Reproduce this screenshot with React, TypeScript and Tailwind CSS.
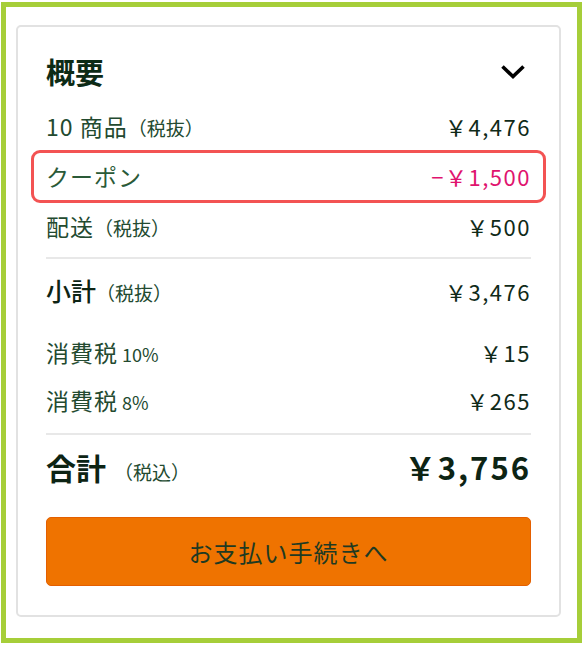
const font = { fontFamily: '"Noto Sans CJK JP", "Liberation Sans", sans-serif' };

function Row({ label, note, value, className = '' }: { label: string; note?: string; value: string; className?: string }) {
  return (
    <div className={`flex items-center justify-between ${className}`}>
      <div className="flex items-baseline text-[#234a30]">
        <span className="text-[23px] tracking-[1px]">{label}</span>
        {note && <span className="text-[19px]">{note}</span>}
      </div>
      <span className="text-[22px] tracking-[1.5px] text-[#0f2a18]">{value}</span>
    </div>
  );
}

export default function App() {
  return (
    <div className="w-[583px] h-[645px] bg-white pt-[2px] pl-[1px]" style={font}>
      <div className="w-[581px] h-[641px] border-[5px] border-[#a6ce39] bg-white pl-[10px] pr-[16px] pt-[18px]">
        <div className="flex flex-col rounded-[5px] border-2 border-[#e2e2e2] px-[28px] pt-[19px] pb-[27px] h-[592px]">
          <div className="flex items-center justify-between h-[52px]">
            <h2 className="text-[29px] font-bold text-[#0d2b16]">概要</h2>
            <svg width="26" height="16" viewBox="0 0 26 16" className="mr-[5px]">
              <polyline points="2.5,2.5 13,12.5 23.5,2.5" fill="none" stroke="#000" strokeWidth="3.6" />
            </svg>
          </div>

          <Row label="10 商品" note="（税抜）" value="￥4,476" className="h-[48px] mt-[4px]" />

          <div className="flex items-center justify-between h-[53px] -mx-[15px] px-[12px] rounded-[9px] border-[3px] border-[#f35353]">
            <span className="text-[23px] tracking-[1px] text-[#2a5a38]">クーポン</span>
            <span className="text-[22px] tracking-[1.5px] text-[#e0136e]">−￥1,500</span>
          </div>

          <Row label="配送" note="（税抜）" value="￥500" className="h-[47px]" />

          <div className="mt-[7px] border-t-2 border-[#e8e8e8]" />

          <div className="flex items-center justify-between h-[64px]">
            <div className="flex items-baseline">
              <span className="text-[25px] font-medium text-[#0d2414]">小計</span>
              <span className="text-[19px] text-[#234a30]">（税抜）</span>
            </div>
            <span className="text-[22px] tracking-[1.5px] text-[#0f2a18]">￥3,476</span>
          </div>

          <div className="flex items-center justify-between h-[48px] mt-[5px]">
            <div className="flex items-baseline text-[#234a30]">
              <span className="text-[23px] tracking-[1px]">消費税</span>
              <span className="ml-1 text-[18px]">10%</span>
            </div>
            <span className="text-[22px] tracking-[1.5px] text-[#0f2a18]">￥15</span>
          </div>

          <div className="flex items-center justify-between h-[48px]">
            <div className="flex items-baseline text-[#234a30]">
              <span className="text-[23px] tracking-[1px]">消費税</span>
              <span className="ml-1 text-[18px]">8%</span>
            </div>
            <span className="text-[22px] tracking-[1.5px] text-[#0f2a18]">￥265</span>
          </div>

          <div className="mt-[9px] border-t-2 border-[#e8e8e8]" />

          <div className="flex items-center justify-between h-[64px]">
            <div className="flex items-baseline">
              <span className="text-[30px] font-bold text-[#0d2414]">合計</span>
              <span className="ml-2 text-[19px] text-[#234a30]">（税込）</span>
            </div>
            <span className="text-[31px] font-bold tracking-[2px] text-[#0d2414]">￥3,756</span>
          </div>

          <button className="mt-[18px] h-[69px] w-full rounded-[5px] border border-[#e45f00] bg-[#ef7300] text-[24px] tracking-[1px] text-[#1e3a22]">
            お支払い手続きへ
          </button>
        </div>
      </div>
    </div>
  );
}
